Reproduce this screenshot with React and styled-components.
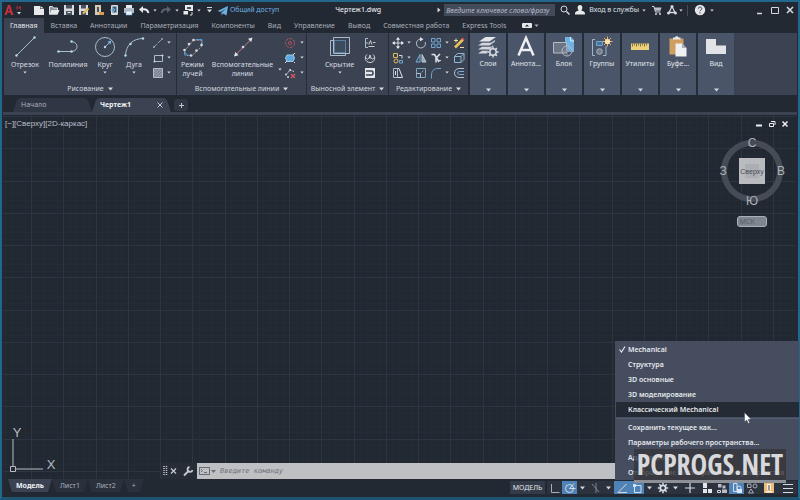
import React, { useState } from "react";
import styled, { createGlobalStyle, css } from "styled-components";

const GlobalStyle = createGlobalStyle`
  body {
    margin: 0;
    background: #222933;
  }
  button, input {
    margin: 0;
    padding: 0;
    border: 0;
    background: none;
    color: inherit;
    font: inherit;
  }
  svg {
    display: block;
    flex: none;
  }
`;

const Window = styled.div`
  position: relative;
  box-sizing: border-box;
  min-height: 100vh;
  display: flex;
  flex-direction: column;
  padding: 0 1px;
  border: 2px solid #22688c;
  border-bottom: 3px solid #1f5471;
  background: #222933;
  color: #d3d7dd;
  font: 7px/10px "Noto Sans", "Open Sans", sans-serif;
  cursor: default;
`;

/* title bar */

const TitleBar = styled.header`
  display: flex;
  align-items: center;
  justify-content: space-between;
  height: 16px;
  padding-left: 1px;
`;

const BarGroup = styled.div`
  display: flex;
  align-items: center;
`;

const LogoButton = styled.button`
  width: 27px;
  height: 14px;
`;

const BarButton = styled.button`
  display: flex;
  align-items: center;
  justify-content: center;
  width: ${(props) => props.$width || 15}px;
  height: 14px;
`;

const ShareLink = styled.a`
  display: flex;
  align-items: center;
  gap: 2px;
  color: #6cb0e0;
  text-decoration: none;
`;

const FileName = styled.h1`
  margin: 0;
  font-size: 7px;
  font-weight: 500;
  color: #e4e7ea;
`;

const SearchInput = styled.input`
  width: 111px;
  height: 12px;
  margin: 0 2px 0 3px;
  padding: 0 2px;
  box-sizing: border-box;
  background: #434a5a;
  font-style: italic;
  &::placeholder {
    color: #b4b9c2;
    opacity: 1;
  }
`;

const SignIn = styled.button`
  display: flex;
  align-items: center;
  gap: 3px;
  padding: 0 3px 0 2px;
  color: #dde0e5;
`;

const Divider = styled.span`
  width: 1px;
  height: 11px;
  margin: 0 4px;
  background: #454c5a;
`;

const Spacer = styled.span`
  width: 36px;
`;

/* ribbon tabs */

const RibbonTabs = styled.nav`
  display: flex;
  gap: 1px;
  height: 15px;
  padding-left: 1px;
`;

const RibbonTab = styled.button`
  padding: 0 6px;
  color: #a9afb9;
  ${(props) =>
    props.$active &&
    css`
      background: #3b4353;
      color: #e6e8eb;
    `}
`;

/* ribbon */

const Ribbon = styled.section`
  display: flex;
  height: 62px;
  margin: 0 0 2px 1px;
  background: #3b4353;
`;

const Panel = styled.div`
  display: flex;
  flex-direction: column;
  width: ${(props) => props.$width}px;
  border-right: 1px solid #262d39;
`;

const PanelBody = styled.div`
  flex: 1;
  display: flex;
  justify-content: center;
  padding-top: 2px;
`;

const PanelTitle = styled.button`
  display: flex;
  align-items: center;
  justify-content: center;
  gap: 4px;
  height: 13px;
  color: #d3d7dd;
`;

const BigButton = styled.button`
  display: flex;
  flex-direction: column;
  align-items: center;
  width: ${(props) => props.$width}px;
  line-height: 9px;
  white-space: nowrap;
  color: #d8dbe0;
`;

const BigLabel = styled.span`
  margin: 1px 0 2px;
`;

const SideArrow = styled.button`
  align-self: center;
  padding-top: 22px;
`;

const ToolGrid = styled.div`
  display: grid;
  grid-template-columns: ${(props) => props.$columns};
  grid-auto-rows: 15px;
  align-content: start;
  justify-items: center;
`;

const ToolButton = styled.button`
  display: flex;
  align-items: center;
  justify-content: center;
  width: 100%;
`;

const TileRow = styled.div`
  display: flex;
  gap: 2px;
  padding: 0 0 0 1px;
  background: #262d39;
`;

const Tile = styled.button`
  display: flex;
  flex-direction: column;
  align-items: center;
  box-sizing: border-box;
  width: 36px;
  padding: 2px 0 3px;
  background: #4b556a;
  color: #e0e3e8;
`;

const TileLabel = styled.span`
  flex: 1;
`;

/* document tabs */

const DocTabs = styled.nav`
  display: flex;
  align-items: flex-end;
  height: 15px;
  padding-left: 10px;
  border-bottom: 3px solid #3b4353;
`;

const DocTab = styled.button`
  display: flex;
  align-items: center;
  justify-content: space-between;
  box-sizing: border-box;
  width: 79px;
  height: 14px;
  padding: 0 8px;
  background: #2f3644;
  color: #a9afb9;
  clip-path: polygon(0 100%, 4px 2px, 7px 0, 72px 0, 75px 2px, 100% 100%);
  ${(props) =>
    props.$active &&
    css`
      background: #3b4353;
      color: #f0f1f3;
      font-weight: 700;
    `}
`;

const AddTab = styled.button`
  display: flex;
  align-items: center;
  justify-content: center;
  width: 14px;
  height: 12px;
  margin: 0 3px 1px;
  border-radius: 3px;
  background: #303745;
`;

/* drawing area */

const Drawing = styled.main`
  position: relative;
  flex: 1;
  display: flex;
  flex-direction: column;
  justify-content: space-between;
  margin-right: 2px;
  background: #212831;
  overflow: hidden;
`;

const Grid = styled.svg`
  position: absolute;
  inset: 0;
  width: 100%;
  height: 100%;
`;

const ViewTop = styled.div`
  position: relative;
  display: flex;
  justify-content: space-between;
  align-items: flex-start;
  padding: 3px 4px 0 2px;
`;

const ViewLabel = styled.span`
  font: 8px/11px "Liberation Sans", Arial, sans-serif;
  color: #b9bec5;
`;

const ViewSide = styled.div`
  display: flex;
  flex-direction: column;
  align-items: flex-end;
`;

const ViewControls = styled.div`
  display: flex;
  align-items: center;
  height: 12px;
`;

const Compass = styled.svg`
  margin: 3px 1px 7px 0;
`;

const UcsButton = styled.button`
  width: 30px;
  height: 11px;
  margin-right: 24px;
  padding-right: 10px;
  border: 1px solid #aab0b8;
  border-radius: 3px;
  background: #7f868f;
  color: #565d67;
  line-height: 8px;
`;

const ViewBottom = styled.div`
  position: relative;
  display: flex;
  align-items: flex-end;
`;

const CommandLine = styled.form`
  display: flex;
  align-items: stretch;
  flex: 1;
  height: 16px;
  margin-left: 98px;
  background: #262d37;
`;

const CommandTools = styled.div`
  display: flex;
  align-items: center;
  width: 36px;
`;

const CommandField = styled.label`
  flex: 1;
  display: flex;
  align-items: center;
  gap: 4px;
  padding-left: 2px;
  background: #bfc0c3;
`;

const CommandInput = styled.input`
  flex: 1;
  min-width: 0;
  font: italic 7px/10px "DejaVu Sans Mono", monospace;
  &::placeholder {
    color: #6b6f77;
    opacity: 1;
  }
`;

/* bottom bar */

const BottomBar = styled.footer`
  display: flex;
  align-items: flex-start;
  justify-content: space-between;
  height: 18px;
  padding-left: 5px;
`;

const LayoutTabs = styled.nav`
  display: flex;
`;

const LayoutTab = styled.button`
  height: 13px;
  padding: 0 8px;
  background: #2a313d;
  color: #a9afb9;
  clip-path: polygon(0 0, 100% 0, calc(100% - 4px) 100%, 4px 100%);
  ${(props) =>
    props.$active &&
    css`
      background: #3b4353;
      color: #f0f1f3;
      font-weight: 700;
    `}
`;

const StatusBar = styled.div`
  display: flex;
  padding-top: 2px;
`;

const ModelButton = styled.button`
  width: 35px;
  height: 13px;
  margin-right: 2px;
  background: #333a48;
  color: #e4e7ea;
`;

const StatusButton = styled.button`
  display: flex;
  align-items: center;
  justify-content: center;
  width: ${(props) => props.$width || 15}px;
  height: 13px;
  background: ${(props) => (props.$on ? "#4f83b8" : "#2c333f")};
`;

/* workspace menu */

const Menu = styled.div`
  position: absolute;
  right: -1px;
  bottom: 17px;
  box-sizing: border-box;
  width: 184px;
  padding: 1px 0 0 1px;
  background: #454d5f;
`;

const MenuItem = styled.button`
  display: flex;
  align-items: center;
  width: 100%;
  height: 15px;
  font-weight: 600;
  color: #e6e8ec;
  white-space: nowrap;
  ${(props) =>
    props.$hover &&
    css`
      background: #242b35;
    `}
`;

const Check = styled.span`
  width: 12px;
  display: flex;
  justify-content: center;
`;

const MenuLine = styled.hr`
  height: 1px;
  margin: 1px 0;
  border: 0;
  background: #566074;
`;

const Pointer = styled.svg`
  position: absolute;
  left: 129px;
  top: 71px;
`;

const Watermark = styled.div`
  position: absolute;
  right: 12px;
  bottom: 14px;
  width: 152px;
  height: 31px;
  border-bottom: 3px solid #8d9096;
  background: rgba(52, 53, 57, 0.8);
  color: #d8d9dc;
  font: 700 28px/30px "Open Sans Condensed", "Roboto Condensed", sans-serif;
  text-align: center;
  white-space: nowrap;
`;

const LIGHT = "#d5d9de";
const BLUE = "#79b4dc";
const STEEL = "#a9bccb";

function Arrow({ small, color = LIGHT }) {
  return small ? (
    <svg width="4" height="3" viewBox="0 0 4 3">
      <path d="M0.3 0.5h3.4L2 2.6z" fill={color} />
    </svg>
  ) : (
    <svg width="5" height="4" viewBox="0 0 5 4">
      <path d="M0 0.6h5L2.5 3.4z" fill={color} />
    </svg>
  );
}

function Icon({ size = 12, children }) {
  return (
    <svg width={size} height={size} viewBox={`0 0 ${size} ${size}`} fill="none" stroke={LIGHT} strokeWidth="1">
      {children}
    </svg>
  );
}

const dot = (x, y, r = 1, fill = LIGHT) => <circle key={`${x}-${y}`} cx={x} cy={y} r={r} fill={fill} stroke="none" />;

const barIcons = {
  new: <path d="M1 2h6v3h4v6H1zM7.500 2L11 4.500H7.500z" fill="#e8e9ea" stroke="none" />,
  open: (
    <>
      <path d="M1.500 10.500V2.500h3l1 1.500h4v2" fill="#8e949d" stroke="#dfe1e4" />
      <path d="M3.500 6h8l-2 4.700h-8z" fill="#e8e9ea" stroke="none" />
    </>
  ),
  save: (
    <>
      <path d="M1 1h10v10H1z" fill="#d9dbdf" stroke="none" />
      <path d="M3 1h6v3.500H3zM3 7h6v4H3z" fill="#4a5260" stroke="none" />
      <path d="M4.500 8.500h3" stroke="#e8e9ea" />
    </>
  ),
  saveAs: (
    <>
      <path d="M1 1h9v10H1z" fill="#d9dbdf" stroke="none" />
      <path d="M3 1h5v3.500H3zM3 7h5v4H3z" fill="#4a5260" stroke="none" />
      <path d="M5 9.500l5.500-5" stroke="#e7b94d" strokeWidth="2" />
    </>
  ),
  openWeb: (
    <>
      <path d="M2 1h6v10H2z" fill="#d4c9b4" stroke="none" />
      <path d="M4 3h2v5H4z" fill="#4a5260" stroke="none" />
      <path d="M6 8h5v3H6z" fill="#d99c4b" stroke="none" />
    </>
  ),
  saveWeb: (
    <>
      <rect x="3" y="1" width="7" height="10" rx="1" fill="#d9dbdf" stroke="none" />
      <path d="M4.500 2.500h4v6h-4z" fill="#3b5874" stroke="none" />
      <path d="M2 6h5M5 4l2 2-2 2" stroke="#6cb0e0" />
    </>
  ),
  print: (
    <>
      <path d="M3 1h6v3H3z" fill="#e8e9ea" stroke="none" />
      <path d="M1 4h10v5H1z" fill="#b6bbc3" stroke="none" />
      <path d="M3 7h6v4H3z" fill="#f1f2f3" stroke="#6cb0e0" strokeWidth="0.600" />
    </>
  ),
  undo: (
    <>
      <path d="M5 2L1 5.500 5 9z" fill="#e8e9ea" stroke="none" />
      <path d="M4 5.500c3-.6 5.500 0 6.500 3.500" stroke="#e8e9ea" strokeWidth="2" />
    </>
  ),
  redo: (
    <>
      <path d="M7 2l4 3.500L7 9z" fill="#5a6270" stroke="none" />
      <path d="M8 5.500C5 4.900 2.500 5.500 1.500 9" stroke="#5a6270" strokeWidth="2" />
    </>
  ),
  plot: (
    <>
      <path d="M3 1h8v6H3z" fill="#e8e9ea" stroke="none" />
      <path d="M5 3h4v2H5z" fill="#4a5260" stroke="none" />
      <path d="M1 6.500h5.500v4.500H1z" fill="#e8e9ea" stroke="#222933" />
      <path d="M10 8v3H8" />
    </>
  ),
  plane: <path d="M0.500 6L11 1 9.500 10.500 6 8.500 4.500 10.500V7.500L9 3.500 3.500 7z" fill="#6cb0e0" stroke="none" />,
  search: (
    <>
      <circle cx="5" cy="5" r="3" />
      <path d="M7.500 7.500l3 3" strokeWidth="1.500" />
    </>
  ),
  user: <path d="M6 1c3 0 2.800 4 1.200 5.200 1 1 3.500.8 3.800 3.300v1H1v-1c.3-2.500 2.800-2.300 3.800-3.300C3.200 5 3 1 6 1z" fill="#e8e9ea" stroke="none" />,
  cart: (
    <>
      <path d="M1 2.500h2l1.500 5.500h5" />
      <path d="M3.500 3.500h7L9.500 6.800h-5z" fill="#b9bec6" stroke="none" />
      {dot(5, 10)}
      {dot(9, 10)}
    </>
  ),
  apps: (
    <>
      <path d="M6 2.500L2.500 9.500M6 2.500l3.500 7M2.500 8.500h7" strokeWidth="1.300" />
      {dot(6, 2.5, 1.5)}
      {dot(2.5, 9, 1.5)}
      {dot(9.5, 9, 1.5)}
    </>
  ),
  help: (
    <>
      <circle cx="6" cy="6" r="5.200" fill="#e4e6e9" stroke="none" />
      <path d="M4.300 4.700c0-2.200 3.500-2.200 3.500 0C7.800 6 6 5.900 6 7.300M6 8.400v1.200" stroke="#38404d" />
    </>
  ),
  minimize: <path d="M3 9.500h5" strokeWidth="1.500" />,
  maximize: <path d="M2.500 3.500h7v6h-7z" />,
  close: <path d="M3 3l6 6M9 3l-6 6" strokeWidth="1.600" />,
};

const bigIcons = {
  line: (
    <>
      <path d="M3.500 20.500l18-18" stroke={STEEL} />
      {dot(3.5, 20.5, 1.2, "#b7d9ee")}
      {dot(21.5, 2.5, 1.2, "#b7d9ee")}
    </>
  ),
  polyline: (
    <>
      <path d="M2.500 16.500h13.500c7-1 6.500-9 0-9.800" stroke={STEEL} />
      {dot(2.5, 16.5, 1.2, "#b7d9ee")}
      {dot(15.5, 16.5, 1.2, "#b7d9ee")}
      {dot(15.5, 6.5, 1.2, "#b7d9ee")}
    </>
  ),
  circle: (
    <>
      <circle cx="12" cy="12" r="9.500" stroke={STEEL} />
      <path d="M12 12l5-5" stroke={BLUE} />
      <path d="M18.500 5.500l-1 4-3-3z" fill={BLUE} stroke="none" />
      {dot(12, 12, 1.2, "#b7d9ee")}
    </>
  ),
  arc: (
    <>
      <path d="M3.500 20.500C4 10 11 3.500 21 3.500" stroke={STEEL} />
      {dot(3.5, 20.5, 1.2, "#b7d9ee")}
      {dot(8.5, 9, 1.2, "#b7d9ee")}
      {dot(21, 3.5, 1.2, "#b7d9ee")}
    </>
  ),
  rays: (
    <>
      <path d="M3.500 16l9-11 8 .5v6L11 20.500H6z" stroke="#b99a9e" strokeDasharray="2 1" />
      <path d="M15 4.500h6v5M3.500 14v6H8" stroke="#4e9bd0" />
      {[[3.5, 15], [8, 9], [12.5, 5], [20.5, 10], [15.5, 15.5], [10, 20.5]].map(([x, y]) => dot(x, y, 1.3))}
    </>
  ),
  xline: (
    <>
      <path d="M5 19.500L19.500 5" stroke="#c07a80" />
      <path d="M21.500 2.500l-1.300 4.500-3.200-3.200zM3 21.500l1.300-4.500 3.200 3.200z" fill="#e4e6e9" stroke="none" />
      {dot(12, 12, 1.3)}
    </>
  ),
  hide: (
    <>
      <path d="M5.500 2.500h16v16h-16z" stroke={STEEL} />
      <path d="M2.500 5.500h15v15h-15z" stroke={STEEL} />
      <path d="M6.500 5.500h11V17.500h-11z" fill="#3d4b5f" stroke="#5b7fa0" />
    </>
  ),
  layers: (
    <>
      <path d="M3 6.500L9.500 2H20l-6.500 4.500z" fill="#e4e6e9" stroke="none" />
      <path d="M2 10.500L6 7.800h9L19 5v1.500l-5.500 4zM2 14.500l4-2.700h9l2-1.500v1l-4 3.200zM2 18.500l4-2.700h6l-1 2.700z" fill="#d3d7dd" stroke="none" />
      <circle cx="17" cy="17" r="3.200" fill="#4b556a" strokeWidth="1.500" />
      <path d="M17 11.500v2.500M17 20v2.500M11.500 17H14M20 17h2.500M13.100 13.100l1.800 1.800M19.100 19.100l1.800 1.800M20.900 13.100l-1.800 1.800M14.900 19.100l-1.800 1.800" strokeWidth="1.500" />
    </>
  ),
  text: <path d="M4.500 20.500L12 3l7.500 17.500M7.500 15h9" stroke="#eceef0" strokeWidth="2.500" />,
  block: (
    <>
      <path d="M13 2h6l3 3v12h-9z" fill="#6fb3e6" stroke="none" />
      <path d="M18.500 2v4H22" stroke="#d8ecfa" />
      <path d="M1.500 7.500h13v10.500h-13z" fill="#6c7585" stroke="#b5bbc4" />
      <circle cx="15" cy="16" r="5" stroke="#b5bbc4" />
      <path d="M9 16h11M15 11v9" stroke="#8d95a2" />
    </>
  ),
  group: (
    <>
      <path d="M5 4.500H2.500v16H5M13 20.500h3V11" stroke="#9fb6c8" />
      <path d="M6.500 6.500h6v4h-6z" fill="#46759f" stroke="#6ba6d6" />
      <circle cx="9.500" cy="16.500" r="2.800" fill="#747d8c" stroke="#a9b2bd" />
      <path d="M17.500 1.500v10M12.500 6.500h10M14 3l7 7M21 3l-7 7" stroke="#e9b45c" />
      {dot(17.5, 6.5, 2.6, "#fbe3ad")}
    </>
  ),
  ruler: (
    <>
      <path d="M3 8.500h18V15H3z" fill="#ecd07c" stroke="none" />
      <path d="M4.500 8.500v3M6.500 8.500v2M8.500 8.500v3M10.500 8.500v2M12.500 8.500v3M14.500 8.500v2M16.500 8.500v3M18.500 8.500v2" stroke="#6d5a33" strokeWidth="0.800" />
    </>
  ),
  paste: (
    <>
      <path d="M3.500 3.500h14v16h-14z" fill="#cf9f62" stroke="none" />
      <path d="M7 4.500h7.500V2.500h-2C12 .8 9.500.8 9 2.500H7z" fill="#e8e9ea" stroke="none" />
      <path d="M9.500 8.500h6.500l4.500 4.500v8.500h-11z" fill="#eef0f2" stroke="none" />
      <path d="M16 8.500l4.500 4.500H16z" fill="#a9aeb6" stroke="none" />
    </>
  ),
  view: <path d="M2 4h10v6.500h10V19H2z" fill="#e1e3e6" stroke="none" />,
};

const toolIcons = {
  segment: (
    <>
      <path d="M1.500 10.500l9-9" stroke="#8aa4b5" strokeDasharray="5 1" />
      {dot(2, 10, 0.8)}
      {dot(10, 2, 0.8)}
    </>
  ),
  rect: (
    <>
      <path d="M2.500 3.500h8v6h-8z" stroke={STEEL} />
      {dot(2.5, 9.5)}
      {dot(10.5, 3.5)}
    </>
  ),
  hatch: (
    <>
      <path d="M1.500 1.500h9v9h-9z" fill="#7b8493" stroke="#b5bbc4" />
      <path d="M2 5l3-3M2 8l6-6M3 10l7-7M6 10l4-4" stroke="#b3b9c2" strokeWidth="0.600" />
    </>
  ),
  target: (
    <>
      <circle cx="6" cy="6" r="4.500" stroke="#b0525b" strokeDasharray="3 1" />
      <circle cx="6" cy="6" r="1.500" stroke="#b0525b" />
    </>
  ),
  cloud: (
    <>
      <path d="M3 3h6l1.500 3-1.500 3.500H3L1.500 6z" fill="#5da9de" stroke="#9dcdec" />
      <path d="M1 11l2-2M9 3l2-2M10 10l1 1" />
    </>
  ),
  erase: (
    <>
      <path d="M2 8l4-5 4 1.500" strokeDasharray="2 1" />
      {dot(2, 7.5)}
      {dot(6, 3)}
      {dot(4, 10)}
      <path d="M7 7l4 4M11 7l-4 4" stroke="#d35560" strokeWidth="1.400" />
    </>
  ),
  detail: (
    <>
      <path d="M4 1.500H1.500v9H4M1.500 6h3" stroke={STEEL} />
      <path d="M5 7.500l1.500-4L8 7.500M9 5.500h2.500M4.500 9.500h6" strokeWidth="0.900" />
    </>
  ),
  detailArc: (
    <>
      <path d="M3 2.500C0 5 1 10.500 6 10.500S12 5 9 2.500" />
      <path d="M4.500 7l1.500-4 1.500 4M5 5.800h2M1.500 5.500l2.500 2M10.500 5.500L8 7.500" strokeWidth="0.900" />
    </>
  ),
  slot: (
    <>
      <path d="M1 1h10v10H1z" fill="#e4e6e9" stroke="none" />
      <path d="M2 4h5.500c2 0 2 4 0 4H2" stroke="#3b4353" strokeWidth="1.500" />
    </>
  ),
  move: (
    <>
      <path d="M6 2v8M2 6h8" />
      <path d="M6 0l2 2.800H4zM6 12l2-2.800H4zM0 6l2.800-2v4zM12 6L9.200 4v4z" fill="#eceef0" stroke="none" />
    </>
  ),
  rotate: (
    <>
      <path d="M5.500 2A4.500 4.500 0 1 0 10.200 5" stroke="#b9c5cf" />
      <path d="M5 0l3.500 2.200L5 4.500z" fill="#dde0e5" stroke="none" />
    </>
  ),
  array: (
    <>
      <path d="M1.500 1.500h3.500v3.500H1.500zM7 1.500h3.500v3.500H7zM1.500 7h3.500v3.500H1.500zM7 7h3.500v3.500H7z" stroke="#6ea6d0" />
    </>
  ),
  pencil: (
    <>
      <path d="M2 10.500l8-8" stroke="#eac05c" strokeWidth="2.600" />
      <path d="M9 1l2 2" stroke="#c9555c" strokeWidth="1.600" />
      <path d="M1 3.500h4M3 1.500v4M7 10.500h4" stroke="#eddca6" />
    </>
  ),
  copy: (
    <>
      <path d="M1.500 1.500h4v4h-4z" stroke="#dfb95f" />
      <path d="M7 3.500h3v3" />
      <circle cx="4" cy="9" r="2" stroke="#dfb95f" />
      <path d="M7.500 8.500h3v2.500h-3z" stroke="#6ea6d0" />
    </>
  ),
  mirror: (
    <>
      <path d="M5 2.500v7.500H1z" stroke={BLUE} />
      <path d="M7 2.500v7.500h4z" fill="#8fa3b5" stroke="#c2cad3" />
    </>
  ),
  trim: (
    <>
      <path d="M1.500 2.500h3L9 10M10 2L6 6v4.500" stroke="#dde0e5" strokeWidth="1.600" />
      <path d="M8 8.500h3" strokeWidth="1" />
    </>
  ),
  box: (
    <>
      <path d="M1.500 4.500h6.500v6H1.500zM1.500 4.500l3-3h6.500v6L8 10.500M8 4.500l3-3" stroke="#8fb7d3" />
    </>
  ),
  stretch: (
    <>
      <path d="M1.500 1.500h4v9h-4z" stroke={STEEL} />
      <path d="M5.500 1.500h1.500l3.500 9h-5M3.500 4v4" stroke="#dde0e5" />
    </>
  ),
  scale: (
    <>
      <path d="M1.500 1.500h9v9h-9z" stroke="#7fa6bf" />
      <path d="M1.500 6.500h4v4" stroke="#b5c3cf" />
      <path d="M6.500 5.500l2-2" stroke="#7fa6bf" />
    </>
  ),
  fillet: <path d="M1.500 11.500V8C1.500 4 4 1.500 8 1.500h3" stroke="#6fa3c8" />,
  offset: (
    <>
      <path d="M11 1.500H6C0 1.500 0 10.500 6 10.500h5" stroke="#b5c3cf" />
      <path d="M11 4.500H6.500C4 4.500 4 7.500 6.500 7.500H11" stroke="#7fb1d2" />
    </>
  ),
};

const statusIcons = {
  ortho: <path d="M2.500 2v8.500h8" stroke="#a9afb9" />,
  polar: (
    <>
      <circle cx="5.500" cy="6.500" r="4" />
      <path d="M5.500 6.500h6M5.500 6.500L10 1.500" />
    </>
  ),
  iso: <path d="M2 2l7 8M6 1v10" stroke="#7d8592" />,
  track: <path d="M10.500 2L2 10.500h9" />,
  osnap: (
    <>
      <path d="M3.500 3.500h6.500v7H3.500z" stroke="#cfe0f0" />
      <path d="M2 2h3v3H2z" fill="#cfe0f0" stroke="none" />
    </>
  ),
  gear: (
    <>
      <circle cx="6" cy="6" r="2.700" stroke="#dde0e5" strokeWidth="1.800" />
      <path d="M6 .8v2M6 9.200v2M.8 6h2M9.200 6h2M2.300 2.300l1.500 1.500M8.200 8.200l1.500 1.500M9.700 2.300L8.200 3.800M3.800 8.200L2.300 9.700" strokeWidth="1.600" />
    </>
  ),
  plus: <path d="M6 1v10M1 6h10" strokeWidth="1.200" />,
  units: <path d="M2 1h4v5H2zM2 7h4v4H2zM7 7h4v4H7z" fill="#e4e6e9" stroke="none" />,
  props: (
    <>
      <path d="M2 2h3.500v3.500H2zM6.500 3.500h3v3h-3zM6 7.500h5V11H6z" fill="#b9bec6" stroke="none" />
      <path d="M1.500 8.500h3v2h-3z" />
    </>
  ),
  lock: (
    <>
      <path d="M2.500 1.500h3.500v8H2.500z" stroke="#cfe0f0" />
      <circle cx="8" cy="6" r="2" stroke="#cfe0f0" />
      <path d="M6 7h5v4H6z" fill="#dce9f5" stroke="none" />
    </>
  ),
  isolate: (
    <>
      <path d="M1.500 2h3.500v3.500H1.500z" stroke="#a9afb9" />
      <circle cx="9" cy="4" r="2" stroke="#a9afb9" />
      <path d="M5 7l2.500 4h-5z" stroke="#a9afb9" />
    </>
  ),
  hardware: (
    <>
      <path d="M1 1h10v10H1z" fill="#efb97a" stroke="none" />
      <path d="M4 2h4v6H4zM3 9h6v1.500H3z" fill="#faf3e8" stroke="none" />
      <path d="M6 3v5" stroke="#3c3c40" />
    </>
  ),
  burger: <path d="M1 2.500h10M1 6.500h10M1 10.500h10" />,
};

const quickTools = [
  ["new", "Создать"],
  ["open", "Открыть"],
  ["save", "Сохранить"],
  ["saveAs", "Сохранить как"],
  ["openWeb", "Открыть с веб-устройств"],
  ["saveWeb", "Сохранить на веб-устройствах"],
  ["print", "Печать"],
];

const ribbonTabs = [
  "Главная", "Вставка", "Аннотации", "Параметризация", "Компоненты", "Вид",
  "Управление", "Вывод", "Совместная работа", "Express Tools",
];

const tiles = [
  ["layers", "Слои"],
  ["text", "Аннота..."],
  ["block", "Блок"],
  ["group", "Группы"],
  ["ruler", "Утилиты"],
  ["paste", "Буфе..."],
  ["view", "Вид"],
];

// icon name, then whether it carries a drop-down arrow
const editTools = [
  ["move", true], ["rotate"], ["array", true], ["pencil"],
  ["copy", true], ["mirror"], ["trim", true], ["box"],
  ["stretch", false], ["scale"], ["fillet", true], ["offset"],
];

const statusTools = [
  ["ortho"], ["polar", true], ["arrow"], ["iso"], ["arrow"], ["track", true], ["osnap", true],
  ["arrow"], ["gear"], ["arrow"], ["plus", false, 18], ["units"], ["props"], ["lock", true],
  ["isolate"], ["hardware", false, 20], ["burger", false, 18],
];

const workspaces = ["Mechanical", "Структура", "3D основные", "3D моделирование", "Классический Mechanical"];
const workspaceActions = [
  "Сохранить текущее как...",
  "Параметры рабочего пространства...",
  "Адаптация...",
  "Отображение метки рабочего пространства",
];

function Big({ icon, label, width, arrow }) {
  return (
    <BigButton $width={width}>
      <Icon size={24}>{bigIcons[icon]}</Icon>
      <BigLabel>
        {label.split("\n").map((part, i) => (
          <React.Fragment key={part}>
            {i > 0 && <br />}
            {part}
          </React.Fragment>
        ))}
      </BigLabel>
      {arrow && <Arrow small />}
    </BigButton>
  );
}

function Tool({ icon }) {
  return (
    <ToolButton aria-label={icon}>
      <Icon>{toolIcons[icon]}</Icon>
    </ToolButton>
  );
}

function ToolArrow() {
  return (
    <ToolButton aria-label="Ещё">
      <Arrow small />
    </ToolButton>
  );
}

function Title({ children }) {
  return (
    <PanelTitle>
      {children}
      <Arrow />
    </PanelTitle>
  );
}

function GridLines() {
  const step = 32.26;
  const minor = step / 5;
  const lines = [];
  for (let i = -4; i < 400; i++) {
    const x = Math.round(28 + i * minor) + 0.5;
    const y = Math.round(1 + i * minor) + 0.5;
    const stroke = i % 5 === 0 ? "#2d3541" : "#232b35";
    lines.push(<line key={`x${i}`} x1={x} x2={x} y1="0" y2="100%" stroke={stroke} />);
    lines.push(<line key={`y${i}`} x1="0" x2="100%" y1={y} y2={y} stroke={stroke} />);
  }
  // major lines are painted over the minor ones
  return <Grid>{lines.sort((a, b) => (a.props.stroke < b.props.stroke ? -1 : 1))}</Grid>;
}

function ViewCube() {
  return (
    <Compass width="76" height="76" viewBox="0 0 76 76" fontFamily="Liberation Sans, Arial, sans-serif" textAnchor="middle">
      <circle cx="38" cy="38" r="28" fill="none" stroke="#464c56" strokeWidth="6" />
      <rect x="25" y="25" width="26" height="26" fill="#b9bbbf" />
      <rect x="31" y="31" width="14" height="14" fill="#abaeb2" />
      <text x="38" y="41" fontSize="7" fill="#454b55">Сверху</text>
      <g fontSize="12" fill="#aeb3ba">
        <text x="38" y="14">С</text>
        <text x="9" y="42">З</text>
        <text x="67" y="42">В</text>
        <text x="38" y="72">Ю</text>
      </g>
    </Compass>
  );
}

function App() {
  const [tab, setTab] = useState("Главная");
  const [command, setCommand] = useState("");

  return (
    <>
      <GlobalStyle />
      <Window>
        <TitleBar>
          <BarGroup>
            <LogoButton aria-label="Меню приложения">
              <svg width="20" height="14" viewBox="0 0 20 14">
                <path d="M0.500 12L4 2h2l3.500 10H7l-.8-2.500H3.500L2.700 12zM4 8h1.800L5 4.500z" fill="#c9303a" fillRule="evenodd" />
                <path d="M13 7V3l1.800 2.500L16.500 3v4" fill="none" stroke="#a22c36" />
                <path d="M13 9h4l-2 2.500z" fill="#d5d9de" />
              </svg>
            </LogoButton>
            {quickTools.map(([icon, label]) => (
              <BarButton key={icon} aria-label={label}>
                <Icon>{barIcons[icon]}</Icon>
              </BarButton>
            ))}
            <BarButton aria-label="Отменить">
              <Icon>{barIcons.undo}</Icon>
            </BarButton>
            <BarButton $width={7} aria-label="История отмен">
              <Arrow small />
            </BarButton>
            <BarButton aria-label="Повторить">
              <Icon>{barIcons.redo}</Icon>
            </BarButton>
            <BarButton $width={7} aria-label="История повторов">
              <Arrow small />
            </BarButton>
            <BarButton aria-label="Окна">
              <Icon>{barIcons.plot}</Icon>
            </BarButton>
            <BarButton $width={7} aria-label="Список окон">
              <Arrow small />
            </BarButton>
            <BarButton aria-label="Настройка панели">
              <svg width="5" height="6" viewBox="0 0 5 6">
                <path d="M0 0h5v1H0zM0 2.500h5L2.500 5.500z" fill={LIGHT} />
              </svg>
            </BarButton>
            <ShareLink href="#share">
              <Icon size={11}>{barIcons.plane}</Icon>
              Общий доступ
            </ShareLink>
          </BarGroup>
          <FileName>Чертеж1.dwg</FileName>
          <BarGroup>
            <svg width="4" height="6" viewBox="0 0 4 6">
              <path d="M0.500 0.500v5L3.500 3z" fill={LIGHT} />
            </svg>
            <SearchInput aria-label="Поиск" placeholder="Введите ключевое слово/фразу" />
            <BarButton aria-label="Найти">
              <Icon>{barIcons.search}</Icon>
            </BarButton>
            <SignIn>
              <Icon size={12}>{barIcons.user}</Icon>
              Вход в службы
              <Arrow small />
            </SignIn>
            <BarButton aria-label="Магазин">
              <Icon>{barIcons.cart}</Icon>
            </BarButton>
            <BarButton aria-label="Приложения">
              <Icon>{barIcons.apps}</Icon>
            </BarButton>
            <Arrow small />
            <Divider />
            <BarButton aria-label="Справка">
              <Icon>{barIcons.help}</Icon>
            </BarButton>
            <BarButton $width={9} aria-label="Разделы справки">
              <Arrow small />
            </BarButton>
            <Spacer />
            <BarButton aria-label="Свернуть">
              <Icon>{barIcons.minimize}</Icon>
            </BarButton>
            <BarButton aria-label="Развернуть">
              <Icon>{barIcons.maximize}</Icon>
            </BarButton>
            <BarButton aria-label="Закрыть">
              <Icon>{barIcons.close}</Icon>
            </BarButton>
          </BarGroup>
        </TitleBar>

        <RibbonTabs>
          {ribbonTabs.map((name) => (
            <RibbonTab key={name} $active={name === tab} onClick={() => setTab(name)}>
              {name}
            </RibbonTab>
          ))}
          <BarButton $width={36} aria-label="Вид ленты">
            <svg width="18" height="7" viewBox="0 0 18 7">
              <rect y="1" width="10" height="5" rx="1" fill="#e4e6e9" />
              <path d="M3 4.500h4L5 2.500z" fill="#222933" />
              <path d="M12.500 2.500h4L14.500 5z" fill="#a9afb9" />
            </svg>
          </BarButton>
        </RibbonTabs>

        <Ribbon>
          <Panel $width={172}>
            <PanelBody>
              <Big icon="line" label="Отрезок" width={36} arrow />
              <Big icon="polyline" label="Полилиния" width={50} />
              <Big icon="circle" label="Круг" width={24} arrow />
              <Big icon="arc" label="Дуга" width={34} arrow />
              <ToolGrid $columns="14px 8px">
                <Tool icon="segment" />
                <ToolArrow />
                <Tool icon="rect" />
                <ToolArrow />
                <Tool icon="hatch" />
                <ToolArrow />
              </ToolGrid>
            </PanelBody>
            <Title>Рисование</Title>
          </Panel>
          <Panel $width={129}>
            <PanelBody>
              <Big icon="rays" label={"Режим\nлучей"} width={30} />
              <Big icon="xline" label={"Вспомогательные\nлинии"} width={70} />
              <SideArrow aria-label="Ещё">
                <Arrow small />
              </SideArrow>
              <ToolGrid $columns="16px 8px">
                <Tool icon="target" />
                <ToolArrow />
                <Tool icon="cloud" />
                <ToolArrow />
                <Tool icon="erase" />
                <ToolArrow />
              </ToolGrid>
            </PanelBody>
            <Title>Вспомогательные линии</Title>
          </Panel>
          <Panel $width={81}>
            <PanelBody>
              <Big icon="hide" label="Скрытие" width={44} arrow />
              <ToolGrid $columns="16px">
                <Tool icon="detail" />
                <Tool icon="detailArc" />
                <Tool icon="slot" />
              </ToolGrid>
            </PanelBody>
            <Title>Выносной элемент</Title>
          </Panel>
          <Panel $width={79}>
            <PanelBody>
              <ToolGrid $columns="14px 8px 16px 14px 8px 16px">
                {editTools.map(([icon, arrow]) => (
                  <React.Fragment key={icon}>
                    <Tool icon={icon} />
                    {arrow === true && <ToolArrow />}
                    {arrow === false && <span />}
                  </React.Fragment>
                ))}
              </ToolGrid>
            </PanelBody>
            <Title>Редактирование</Title>
          </Panel>
          <TileRow>
            {tiles.map(([icon, label]) => (
              <Tile key={icon}>
                <Icon size={24}>{bigIcons[icon]}</Icon>
                <TileLabel>{label}</TileLabel>
                <Arrow />
              </Tile>
            ))}
          </TileRow>
        </Ribbon>

        <DocTabs>
          <DocTab>Начало</DocTab>
          <DocTab $active>
            Чертеж1
            <svg width="6" height="6" viewBox="0 0 6 6" stroke="#c3c7cd">
              <path d="M0.500 0.500l5 5M5.500 0.500l-5 5" />
            </svg>
          </DocTab>
          <AddTab aria-label="Новый чертёж">
            <svg width="7" height="7" viewBox="0 0 7 7" stroke="#c3c7cd">
              <path d="M3.500 1v5M1 3.500h5" />
            </svg>
          </AddTab>
        </DocTabs>

        <Drawing>
          <GridLines />
          <ViewTop>
            <ViewLabel>[−][Сверху][2D-каркас]</ViewLabel>
            <ViewSide>
              <ViewControls>
                <BarButton $width={13} aria-label="Свернуть вид">
                  <Icon size={8}>
                    <path d="M1 5.500h6" stroke="#eceef0" strokeWidth="2" />
                  </Icon>
                </BarButton>
                <BarButton $width={13} aria-label="Восстановить вид">
                  <Icon size={8}>
                    <path d="M1.500 3.500h4v3h-4zM3 1.500h4v3.500" stroke="#eceef0" />
                  </Icon>
                </BarButton>
                <BarButton $width={13} aria-label="Закрыть вид">
                  <Icon size={8}>
                    <path d="M1.500 1.500l5 5M6.500 1.500l-5 5" stroke="#eceef0" strokeWidth="1.500" />
                  </Icon>
                </BarButton>
              </ViewControls>
              <ViewCube />
              <UcsButton>МСК</UcsButton>
            </ViewSide>
          </ViewTop>
          <ViewBottom>
            <svg width="60" height="56" viewBox="0 0 60 56" fill="none" stroke="#b9bdc3">
              <path d="M7.500 43.500h5v5h-5zM10 43V16M13 46h27" />
              <g fill="#b9bdc3" stroke="none" fontFamily="Liberation Sans, Arial, sans-serif" fontSize="13" textAnchor="middle">
                <text x="14" y="14">Y</text>
                <text x="48" y="46">X</text>
              </g>
            </svg>
            <CommandLine onSubmit={(e) => e.preventDefault()}>
              <CommandTools>
                <svg width="34" height="12" viewBox="0 0 34 12" fill="none" stroke="#c3c7cd">
                  <path d="M3 1v10M5.500 1v10" strokeDasharray="1 1" strokeWidth="1.500" />
                  <path d="M10 3.500l5 5M15 3.500l-5 5" strokeWidth="1.300" />
                  <path d="M23 10.500l5-5" strokeWidth="2" />
                  <path d="M28.500 2a2.500 2.500 0 1 0 3 3" strokeWidth="1.800" />
                </svg>
              </CommandTools>
              <CommandField>
                <svg width="17" height="9" viewBox="0 0 17 9" fill="none" stroke="#666b74">
                  <rect x="0.500" y="0.500" width="10" height="7" />
                  <path d="M2 2l1.500 1.500L2 5M5 5.500h3" />
                  <path d="M12 3h5l-2.500 3z" fill="#666b74" stroke="none" />
                </svg>
                <CommandInput
                  aria-label="Командная строка"
                  placeholder="Введите команду"
                  value={command}
                  onChange={(e) => setCommand(e.target.value)}
                />
              </CommandField>
            </CommandLine>
          </ViewBottom>
        </Drawing>

        <BottomBar>
          <LayoutTabs>
            <LayoutTab $active>Модель</LayoutTab>
            <LayoutTab>Лист1</LayoutTab>
            <LayoutTab>Лист2</LayoutTab>
            <LayoutTab aria-label="Новый лист">+</LayoutTab>
          </LayoutTabs>
          <StatusBar>
            <ModelButton>МОДЕЛЬ</ModelButton>
            {statusTools.map(([icon, on, width], i) =>
              icon === "arrow" ? (
                <StatusButton key={i} $width={11} aria-label="Параметры">
                  <Arrow />
                </StatusButton>
              ) : (
                <StatusButton key={i} $on={on} $width={width} aria-label={icon}>
                  <Icon>{statusIcons[icon]}</Icon>
                </StatusButton>
              )
            )}
          </StatusBar>
        </BottomBar>

        <Menu role="menu">
          {workspaces.map((name, i) => (
            <MenuItem key={name} role="menuitem" $hover={i === 4}>
              <Check>
                {i === 0 && (
                  <svg width="7" height="7" viewBox="0 0 7 7" fill="none" stroke="#e6e8ec">
                    <path d="M0.500 3.500l2 2.500L6 0.500" strokeWidth="1.200" />
                  </svg>
                )}
              </Check>
              {name}
            </MenuItem>
          ))}
          <MenuLine />
          {workspaceActions.map((name) => (
            <MenuItem key={name} role="menuitem">
              <Check />
              {name}
            </MenuItem>
          ))}
          <Pointer width="8" height="12" viewBox="0 0 8 12">
            <path d="M0.500 0.500v9.500l2.200-2 1.500 3.500 1.500-.7-1.500-3.300h3z" fill="#fff" stroke="#3a3f48" strokeWidth="0.500" />
          </Pointer>
        </Menu>
        <Watermark>PCPROGS.NET</Watermark>
      </Window>
    </>
  );
}

export default App;
